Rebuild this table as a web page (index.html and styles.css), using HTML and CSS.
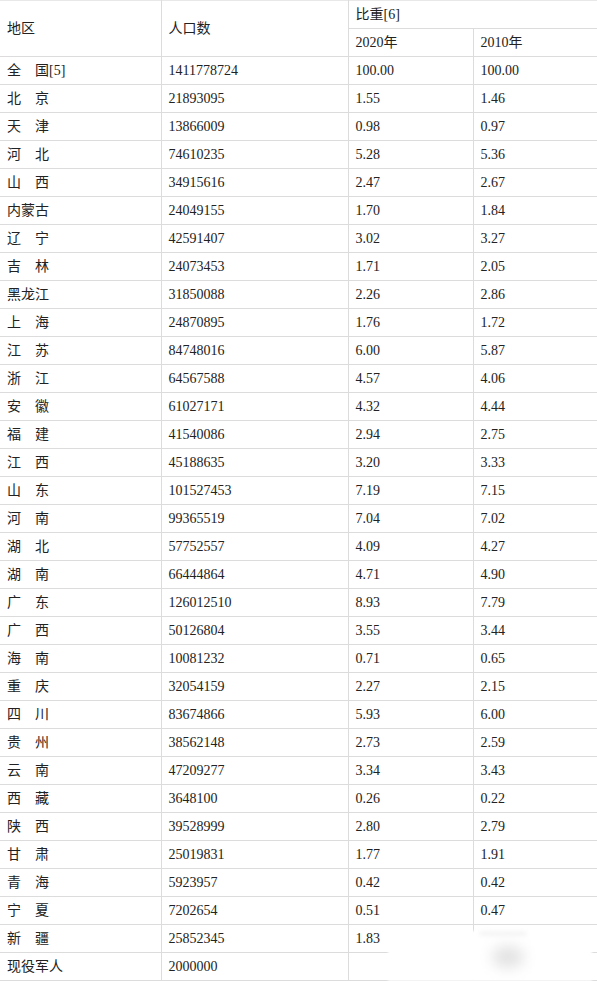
FILE: index.html
```html
<!DOCTYPE html>
<html lang="zh-CN">
<head>
<meta charset="utf-8">
<title>人口数</title>
<link rel="stylesheet" href="styles.css">
</head>
<body>
<div class="wrap">
<table class="pop">
<colgroup>
<col class="c1"><col class="c2"><col class="c3"><col class="c4">
</colgroup>
<thead>
<tr><th rowspan="2">地区</th><th rowspan="2">人口数</th><th colspan="2">比重[6]</th></tr>
<tr><th>2020年</th><th>2010年</th></tr>
</thead>
<tbody>
<tr><td>全　国[5]</td><td>1411778724</td><td>100.00</td><td>100.00</td></tr>
<tr><td>北　京</td><td>21893095</td><td>1.55</td><td>1.46</td></tr>
<tr><td>天　津</td><td>13866009</td><td>0.98</td><td>0.97</td></tr>
<tr><td>河　北</td><td>74610235</td><td>5.28</td><td>5.36</td></tr>
<tr><td>山　西</td><td>34915616</td><td>2.47</td><td>2.67</td></tr>
<tr><td>内蒙古</td><td>24049155</td><td>1.70</td><td>1.84</td></tr>
<tr><td>辽　宁</td><td>42591407</td><td>3.02</td><td>3.27</td></tr>
<tr><td>吉　林</td><td>24073453</td><td>1.71</td><td>2.05</td></tr>
<tr><td>黑龙江</td><td>31850088</td><td>2.26</td><td>2.86</td></tr>
<tr><td>上　海</td><td>24870895</td><td>1.76</td><td>1.72</td></tr>
<tr><td>江　苏</td><td>84748016</td><td>6.00</td><td>5.87</td></tr>
<tr><td>浙　江</td><td>64567588</td><td>4.57</td><td>4.06</td></tr>
<tr><td>安　徽</td><td>61027171</td><td>4.32</td><td>4.44</td></tr>
<tr><td>福　建</td><td>41540086</td><td>2.94</td><td>2.75</td></tr>
<tr><td>江　西</td><td>45188635</td><td>3.20</td><td>3.33</td></tr>
<tr><td>山　东</td><td>101527453</td><td>7.19</td><td>7.15</td></tr>
<tr><td>河　南</td><td>99365519</td><td>7.04</td><td>7.02</td></tr>
<tr><td>湖　北</td><td>57752557</td><td>4.09</td><td>4.27</td></tr>
<tr><td>湖　南</td><td>66444864</td><td>4.71</td><td>4.90</td></tr>
<tr><td>广　东</td><td>126012510</td><td>8.93</td><td>7.79</td></tr>
<tr><td>广　西</td><td>50126804</td><td>3.55</td><td>3.44</td></tr>
<tr><td>海　南</td><td>10081232</td><td>0.71</td><td>0.65</td></tr>
<tr><td>重　庆</td><td>32054159</td><td>2.27</td><td>2.15</td></tr>
<tr><td>四　川</td><td>83674866</td><td>5.93</td><td>6.00</td></tr>
<tr><td>贵　州</td><td>38562148</td><td>2.73</td><td>2.59</td></tr>
<tr><td>云　南</td><td>47209277</td><td>3.34</td><td>3.43</td></tr>
<tr><td>西　藏</td><td>3648100</td><td>0.26</td><td>0.22</td></tr>
<tr><td>陕　西</td><td>39528999</td><td>2.80</td><td>2.79</td></tr>
<tr><td>甘　肃</td><td>25019831</td><td>1.77</td><td>1.91</td></tr>
<tr><td>青　海</td><td>5923957</td><td>0.42</td><td>0.42</td></tr>
<tr><td>宁　夏</td><td>7202654</td><td>0.51</td><td>0.47</td></tr>
<tr><td>新　疆</td><td>25852345</td><td>1.83</td><td>1.83</td></tr>
<tr><td>现役军人</td><td>2000000</td><td></td><td></td></tr>
</tbody>
</table>
<div class="smudge"><span class="band"></span><span class="blob"></span></div>
</div>
</body>
</html>
```

FILE: styles.css
```css
html, body {
  margin: 0;
  padding: 0;
  background: #fff;
}
.wrap {
  position: relative;
  width: 597px;
  height: 981px;
  overflow: hidden;
}
.pop {
  border-collapse: collapse;
  table-layout: fixed;
  width: 597px;
  font-family: "Liberation Serif", "Noto Sans CJK SC", serif;
  font-size: 14px;
  color: #222;
}
.c1 { width: 161px; }
.c2 { width: 187px; }
.c3 { width: 125px; }
.c4 { width: 124px; }
.pop th, .pop td {
  border: 1px solid #dcdcdc;
  height: 27px;
  padding: 0 7px;
  text-align: left;
  font-weight: normal;
  vertical-align: middle;
  white-space: nowrap;
  line-height: 16px;
}
.pop thead tr:first-child th {
  border-top-color: #e8e8e8;
}
.pop tr > :first-child {
  border-left: none;
}
.smudge {
  position: absolute;
  left: 388px;
  top: 931px;
  width: 204px;
  height: 50px;
  background: #fff;
  filter: blur(1px);
}
.band {
  position: absolute;
  left: 92px;
  top: 1px;
  width: 46px;
  height: 3px;
  background: #eeeeee;
  filter: blur(2px);
}
.blob {
  position: absolute;
  left: 104px;
  top: 15px;
  width: 32px;
  height: 22px;
  border-radius: 50%;
  background: #e2e2e2;
  filter: blur(7px);
}
```
